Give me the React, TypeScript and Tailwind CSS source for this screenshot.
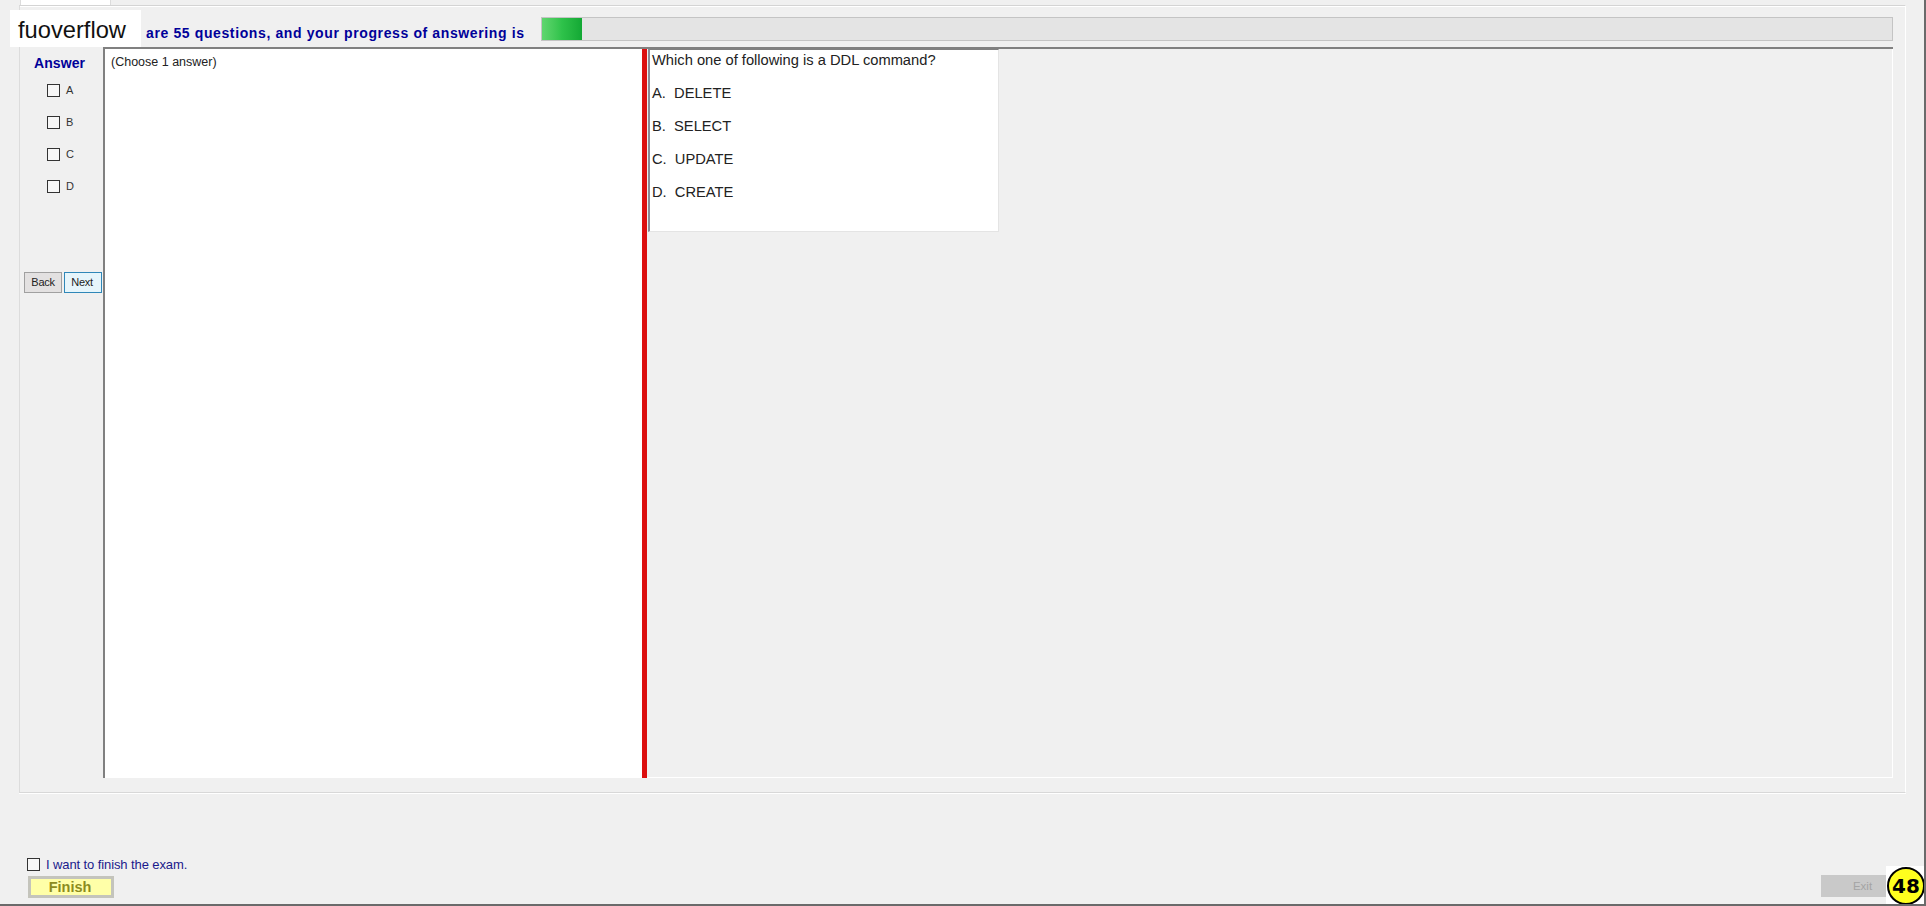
import React from 'react';

const options = ['A', 'B', 'C', 'D'];
const answers = ['A.  DELETE', 'B.  SELECT', 'C.  UPDATE', 'D.  CREATE'];

export default function App() {
  return (
    <div className="relative h-[906px] w-[1926px] overflow-hidden border-r-2 border-b-2 border-[#6a6a6a] bg-[#f0f0f0] font-['Liberation_Sans',Arial,sans-serif]">
      {/* tab strip */}
      <div className="ml-[20px] h-[5px] w-[91px] border-x border-[#dcdcdc] bg-white" />

      {/* tab page */}
      <div className="ml-[19px] flex h-[788px] w-[1887px] flex-col border border-t-[#d4d4d4] border-r-white border-b-[#d8d8d8] border-l-[#dcdcdc] shadow-[inset_0_1px_0_#fff,0_1px_0_#fff]">
        <div className="flex h-[41px] shrink-0 items-center pt-[5px] pr-[12px] pl-[126px]">
          <span className="w-[395px] shrink-0 pt-[8px] text-[14px] font-bold tracking-[0.62px] whitespace-nowrap text-[#000099]">
            are 55 questions, and your progress of answering is
          </span>
          <div className="h-[24px] flex-1 border border-[#c4c4c4] bg-[#e4e4e4]">
            <div className="h-full w-[40px] bg-gradient-to-r from-[#5fd66f] via-[#2ec24a] to-[#12a834]" />
          </div>
        </div>

        <div className="flex h-[731px] shrink-0 pr-[12px]">
          {/* answer column */}
          <div className="flex w-[83px] shrink-0 flex-col">
            <div className="mt-[6px] pl-[14px] text-[14px] font-bold tracking-[0.1px] text-[#000099]">Answer</div>
            <div className="mt-[10px] flex flex-col gap-[19px] pl-[27px]">
              {options.map(o => (
                <label key={o} className="flex h-[13px] items-center gap-[6px]">
                  <span className="h-[13px] w-[13px] border border-[#333] bg-[#f7f7f7]" />
                  <span className="mb-[1px] text-[11px] text-[#333]">{o}</span>
                </label>
              ))}
            </div>
            <div className="mt-[79px] flex gap-[2px] pl-[4px]">
              <button className="h-[21px] w-[38px] border border-[#a0a0a0] bg-[#e3e1e1] text-[11px] tracking-[-0.3px] text-[#222]">Back</button>
              <button className="h-[21px] w-[38px] border border-[#2f87b8] bg-[#e6f5fb] pr-[2px] text-[11px] tracking-[-0.3px] text-[#222]">Next</button>
            </div>
          </div>

          {/* panes */}
          <div className="flex flex-1 border-t-2 border-t-[#808080]">
            <div className="w-[539px] shrink-0 border-l-2 border-l-[#808080] bg-white pt-[4px] pr-[5px] pl-[6px] text-[12.5px] text-[#222]">
              (Choose 1 answer)
            </div>
            <div className="w-[5px] shrink-0 bg-[#dc0f0f]" />
            <div className="flex-1 border-r border-b border-white pl-[1px]">
              <div className="h-[183px] w-[351px] border-t border-r border-b border-t-[#808080] border-r-[#e4e4e4] border-b-[#e4e4e4] border-l-2 border-l-[#8a8a96] bg-white pl-[2px] text-[14.7px] text-[#222]">
                <p className="h-[27px] pt-[1px] leading-[19px]">Which one of following is a DDL command?</p>
                <div className="flex flex-col">
                  {answers.map(a => (
                    <p key={a} className="flex h-[33px] items-center whitespace-pre">
                      {a}
                    </p>
                  ))}
                </div>
              </div>
            </div>
          </div>
        </div>
      </div>

      {/* footer */}
      <div className="flex items-end justify-between pt-[64px] pr-[38px] pl-[27px]">
        <div className="flex flex-col">
          <label className="flex items-center gap-[6px]">
            <span className="h-[13px] w-[13px] border border-[#333] bg-[#f7f7f7]" />
            <span className="text-[13px] leading-[15px] tracking-[-0.1px] text-[#1a1a8c]">I want to finish the exam.</span>
          </label>
          <button className="mt-[4px] ml-[1px] h-[22px] w-[86px] border-[3px] border-[#c4c4bc] bg-[#ffffa8] pr-[2px] text-[14.5px] leading-[14px] font-bold text-[#8c8c1e]">
            Finish
          </button>
        </div>
        <button className="mb-[1px] h-[22px] w-[65px] bg-[#c9c9c9] pt-[1px] pl-[18px] text-[11.5px] text-[#a4a4a4]">Exit</button>
      </div>

      {/* logo and timer sit over the window */}
      <div className="absolute top-[10px] left-[10px] flex h-[37px] w-[131px] items-center bg-white pt-[5px] pl-[8px] text-[23.7px] text-[#111]">
        fuoverflow
      </div>
      <div className="absolute right-[-2px] bottom-[-2px] flex h-[40px] w-[40px] items-center justify-center bg-white">
        <div className="flex h-[38px] w-[38px] items-center justify-center rounded-full border-2 border-black bg-[#ffff1e] font-['DejaVu_Sans',sans-serif] text-[20px] font-bold text-black">
          48
        </div>
      </div>
    </div>
  );
}
